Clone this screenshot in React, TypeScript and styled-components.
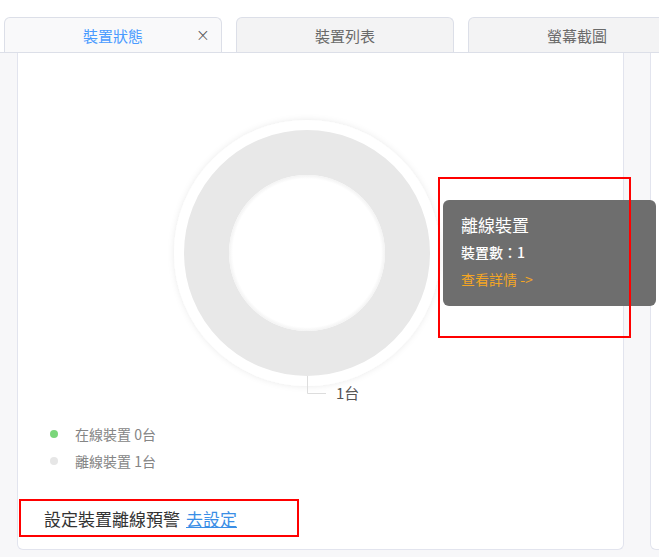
import React from "react";
import styled, { createGlobalStyle } from "styled-components";

const Global = createGlobalStyle`
  html, body { margin: 0; padding: 0; background: #ffffff; }
  body { font-family: "Noto Sans CJK TC", "Noto Sans", sans-serif; }
  * { box-sizing: border-box; }
`;

const Page = styled.div`
  width: 659px;
  height: 557px;
  overflow: hidden;
  display: flex;
  flex-direction: column;
  background: #ffffff;
`;

const TabBar = styled.div`
  display: flex;
  gap: 14px;
  padding: 17px 0 0 4px;
  height: 53px;
  border-bottom: 1px solid #dcdfe8;
  background: #ffffff;
  overflow: hidden;
`;

const Tab = styled.div<{ $active?: boolean }>`
  position: relative;
  flex: 0 0 218px;
  height: 36px;
  border: 1px solid #dcdfe8;
  border-bottom: none;
  border-radius: 6px 6px 0 0;
  background: ${(p) => (p.$active ? "#f9f9fa" : "#f3f3f4")};
  color: ${(p) => (p.$active ? "#4a9bff" : "#6a6a6a")};
  font-size: 15px;
  display: flex;
  align-items: center;
  justify-content: center;
  padding-bottom: 1px;
`;

const Close = styled.span`
  position: absolute;
  right: 11px;
  top: 7px;
  color: #555;
  font-size: 17px;
  font-weight: 300;
  font-family: "DejaVu Sans", sans-serif;
  line-height: 20px;
`;

const Body = styled.div`
  flex: 1;
  display: flex;
  gap: 26px;
  padding: 0 0 7px 17px;
  background: #f7f7f9;
`;

const Card = styled.div<{ $w: number }>`
  position: relative;
  flex: 0 0 ${(p) => p.$w}px;
  background: #ffffff;
  border: 1px solid #e2e4ee;
  border-top: none;
  border-radius: 0 0 6px 6px;
  display: flex;
  flex-direction: column;
`;

const ChartSvg = styled.svg`
  display: block;
`;

const Tooltip = styled.div`
  position: absolute;
  left: 425px;
  top: 147px;
  width: 213px;
  height: 106px;
  background: #6e6e6e;
  border-radius: 6px;
  padding: 11px 0 0 18px;
  color: #ffffff;
  z-index: 2;
`;

const TipTitle = styled.div`
  font-size: 17px;
  line-height: 28px;
`;

const TipRow = styled.div`
  font-size: 14px;
  line-height: 26px;
  font-weight: 500;
`;

const TipLink = styled.div`
  font-size: 14px;
  line-height: 28px;
  color: #f5a623;
`;

const RedBox = styled.div`
  position: absolute;
  left: 420px;
  top: 124px;
  width: 193px;
  height: 161px;
  border: 2px solid #ff0000;
  z-index: 3;
`;

const Legend = styled.div`
  display: flex;
  flex-direction: column;
  gap: 8px;
  padding-left: 32px;
  margin-top: 11px;
`;

const LegendItem = styled.div`
  display: flex;
  align-items: center;
  gap: 17px;
  font-size: 14px;
  color: #858585;
  height: 19px;
`;

const Dot = styled.span<{ $c: string }>`
  width: 8px;
  height: 8px;
  border-radius: 50%;
  background: ${(p) => p.$c};
`;

const AlertBox = styled.div`
  margin: 29px 0 0 1px;
  width: 280px;
  height: 38px;
  border: 2px solid #ff0000;
  display: flex;
  align-items: center;
  padding-left: 23px;
  font-size: 17px;
  color: #333333;
  gap: 6px;
`;

const Link = styled.a`
  color: #3a8ee6;
  text-decoration: underline;
  cursor: pointer;
`;

export default function App() {
  return (
    <Page>
      <Global />
      <TabBar>
        <Tab $active>
          裝置狀態
          <Close>×</Close>
        </Tab>
        <Tab>裝置列表</Tab>
        <Tab>螢幕截圖</Tab>
      </TabBar>
      <Body>
        <Card $w={607}>
          <ChartSvg width={605} height={360} viewBox="0 0 605 360">
            <defs>
              <filter id="sh" x="-20%" y="-20%" width="140%" height="140%">
                <feDropShadow dx="0" dy="0" stdDeviation="3" floodColor="#000" floodOpacity="0.09" />
              </filter>
              <radialGradient id="hole" cx="0.5" cy="0.5" r="0.5">
                <stop offset="0.95" stopColor="#ffffff" />
                <stop offset="1" stopColor="#f3f3f3" />
              </radialGradient>
            </defs>
            <circle cx={289} cy={200} r={133} fill="#ffffff" filter="url(#sh)" />
            <circle cx={289} cy={200} r={100.5} fill="none" stroke="#e8e8e8" strokeWidth={45} />
            <circle cx={289} cy={200} r={78} fill="url(#hole)" />
            <polyline points="289.5,323 289.5,340.5 308,340.5" fill="none" stroke="#dddddd" strokeWidth={1} />
            <text x={318} y={346} fontSize={15} fill="#555555" fontFamily='"Noto Sans CJK TC", sans-serif'>
              1台
            </text>
          </ChartSvg>
          <Tooltip>
            <TipTitle>離線裝置</TipTitle>
            <TipRow>裝置數：1</TipRow>
            <TipLink>查看詳情 -&gt;</TipLink>
          </Tooltip>
          <RedBox />
          <Legend>
            <LegendItem>
              <Dot $c="#7ad67a" />
              在線裝置 0台
            </LegendItem>
            <LegendItem>
              <Dot $c="#e6e6e6" />
              離線裝置 1台
            </LegendItem>
          </Legend>
          <AlertBox>
            設定裝置離線預警 <Link>去設定</Link>
          </AlertBox>
        </Card>
        <Card $w={100} />
      </Body>
    </Page>
  );
}
